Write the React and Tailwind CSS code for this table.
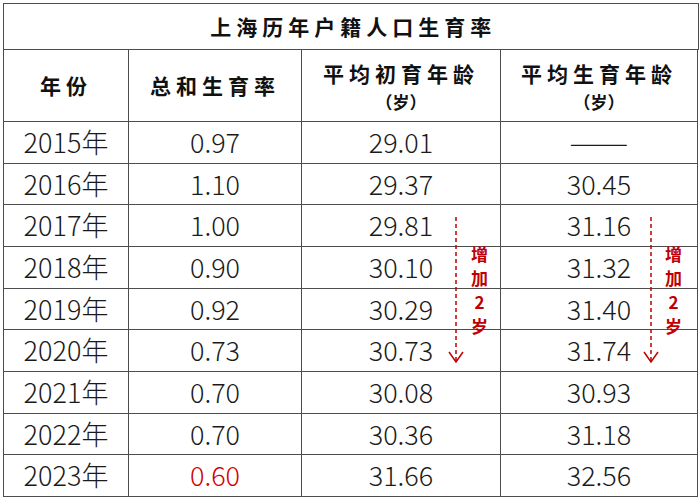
const ROWS = [
  { year: '2015年', tfr: '0.97', first: '29.01', avg: null, h: 'h-[42px]' },
  { year: '2016年', tfr: '1.10', first: '29.37', avg: '30.45', h: 'h-[41px]' },
  { year: '2017年', tfr: '1.00', first: '29.81', avg: '31.16', h: 'h-[42px]' },
  { year: '2018年', tfr: '0.90', first: '30.10', avg: '31.32', h: 'h-[42px]' },
  { year: '2019年', tfr: '0.92', first: '30.29', avg: '31.40', h: 'h-[41px]' },
  { year: '2020年', tfr: '0.73', first: '30.73', avg: '31.74', h: 'h-[42px]' },
  { year: '2021年', tfr: '0.70', first: '30.08', avg: '30.93', h: 'h-[42px]' },
  { year: '2022年', tfr: '0.70', first: '30.36', avg: '31.18', h: 'h-[41px]' },
  { year: '2023年', tfr: '0.60', first: '31.66', avg: '32.56', h: 'h-[42px]', red: true },
]

const cell = 'flex items-center justify-center border-r-[1.5px] border-b-[1.5px] border-[#4d4d4d]'
const head = 'font-semibold text-[21px] tracking-[5px] text-[#111]'

function Arrow({ left }) {
  return (
    <svg className="absolute" style={{ left, top: 211 }} width="20" height="150" viewBox="0 0 20 150">
      <line x1="10" y1="2" x2="10" y2="147" stroke="#c00000" strokeWidth="1.5" strokeDasharray="4 3" />
      <polyline points="3,137 10,147 17,137" fill="none" stroke="#c00000" strokeWidth="1.5" />
    </svg>
  )
}

function Note({ left }) {
  return (
    <div
      className="absolute flex flex-col items-center text-[17px] leading-[24px] font-semibold text-[#c00000]"
      style={{ left, top: 238 }}
    >
      <span>增</span>
      <span>加</span>
      <span>2</span>
      <span>岁</span>
    </div>
  )
}

export default function App() {
  return (
    <div
      className="w-[700px] h-[499px] bg-white pt-[3px] pl-[3px]"
      style={{ fontFamily: '"Noto Sans CJK SC", "Noto Sans", sans-serif' }}
    >
      <div className="relative w-[695.5px] border-l-[1.5px] border-t-[1.5px] border-[#4d4d4d]">
        <div className={`${cell} h-[46px] w-full`}>
          <span className="text-[21px] font-semibold tracking-[5px] text-[#111] pl-[5px]">上海历年户籍人口生育率</span>
        </div>
        <div className="flex h-[72px]">
          <div className={`${cell} w-[125px]`}><span className={head}>年份</span></div>
          <div className={`${cell} w-[173px]`}><span className={head}>总和生育率</span></div>
          <div className={`${cell} w-[199px] flex-col`}>
            <span className={`${head} leading-[30px] mt-[2px]`}>平均初育年龄</span>
            <span className="text-[17px] font-semibold text-[#111] leading-[28px]">（岁）</span>
          </div>
          <div className={`${cell} w-[197px] flex-col`}>
            <span className={`${head} leading-[30px] mt-[2px]`}>平均生育年龄</span>
            <span className="text-[17px] font-semibold text-[#111] leading-[28px]">（岁）</span>
          </div>
        </div>
        {ROWS.map((r) => (
          <div key={r.year} className={`flex ${r.h} text-[27px] font-light text-[#1a1a1a]`}>
            <div className={`${cell} w-[125px]`}>{r.year}</div>
            <div className={`${cell} w-[173px] ${r.red ? 'text-[#d40000]' : ''}`}>{r.tfr}</div>
            <div className={`${cell} w-[199px]`}>{r.first}</div>
            <div className={`${cell} w-[197px]`}>
              {r.avg ?? <span className="inline-block scale-x-[2.6]">—</span>}
            </div>
          </div>
        ))}
        <Arrow left={442} />
        <Note left={467} />
        <Arrow left={637} />
        <Note left={661} />
      </div>
    </div>
  )
}
